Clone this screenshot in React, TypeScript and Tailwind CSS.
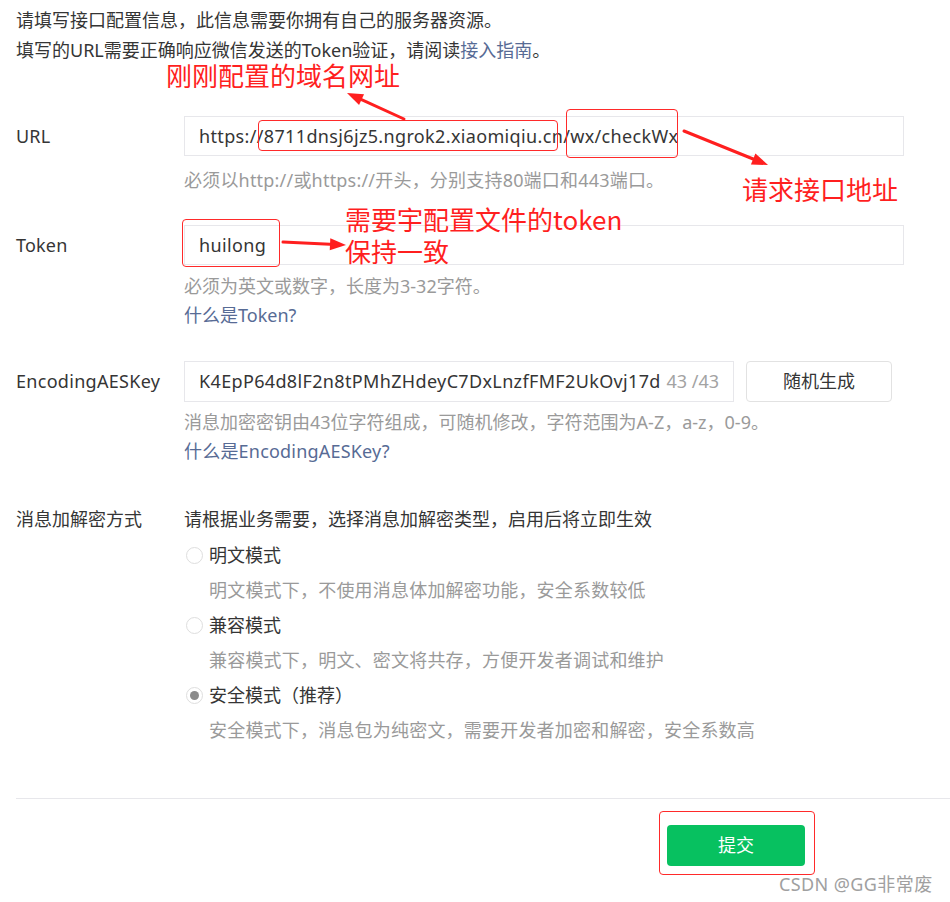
const FONT = "font-['Noto_Sans','Noto_Sans_CJK_SC',sans-serif]";
const RED_FONT = "font-['Noto_Sans_CJK_SC',sans-serif]";

function Radio({ checked }: { checked?: boolean }) {
  return (
    <span className="w-[17px] h-[17px] rounded-full border border-[#dedede] bg-white flex items-center justify-center shrink-0">
      {checked && <span className="w-[9px] h-[9px] rounded-full bg-[#8c8c8c]" />}
    </span>
  );
}

function Field({ label, children }: { label: string; children: React.ReactNode }) {
  return (
    <div className="flex">
      <div className="w-[184px] shrink-0 pl-4 h-[40px] leading-[40px] tracking-[0.2px]">{label}</div>
      <div className="flex-1 pr-[46px]">{children}</div>
    </div>
  );
}

const modes = [
  { name: '明文模式', desc: '明文模式下，不使用消息体加解密功能，安全系数较低' },
  { name: '兼容模式', desc: '兼容模式下，明文、密文将共存，方便开发者调试和维护' },
  { name: '安全模式（推荐）', desc: '安全模式下，消息包为纯密文，需要开发者加密和解密，安全系数高', checked: true },
];

function Arrow({ x1, y1, x2, y2 }: { x1: number; y1: number; x2: number; y2: number }) {
  const a = Math.atan2(y2 - y1, x2 - x1);
  const len = 16;
  const w = 6;
  const bx = x2 - len * Math.cos(a);
  const by = y2 - len * Math.sin(a);
  const px = -Math.sin(a) * w;
  const py = Math.cos(a) * w;
  return (
    <g>
      <line x1={x1} y1={y1} x2={bx} y2={by} stroke="#ff1f1f" strokeWidth={3} strokeLinecap="round" />
      <polygon points={`${x2},${y2} ${bx + px},${by + py} ${bx - px},${by - py}`} fill="#ff1f1f" />
    </g>
  );
}

export default function App() {
  return (
    <div className={`relative w-[950px] h-[902px] bg-white overflow-hidden text-[18px] text-[#353535] ${FONT}`}>
      {/* intro */}
      <div className="pt-[5px] pl-4 leading-[30px]">
        <div>请填写接口配置信息，此信息需要你拥有自己的服务器资源。</div>
        <div>
          填写的URL需要正确响应微信发送的Token验证，请阅读<span className="text-[#576b95]">接入指南</span>。
        </div>
      </div>

      {/* URL */}
      <div className="mt-[51px]">
        <Field label="URL">
          <div className="h-[40px] border border-[#e7e7eb] bg-white pl-[14px] leading-[38px] whitespace-nowrap overflow-hidden tracking-[0.35px]">
            https://8711dnsj6jz5.ngrok2.xiaomiqiu.cn/wx/checkWx
          </div>
          <div className="mt-[10px] leading-[28px] text-[#9a9a9a] tracking-[0.2px]">必须以http://或https://开头，分别支持80端口和443端口。</div>
        </Field>
      </div>

      {/* Token */}
      <div className="mt-[31px]">
        <Field label="Token">
          <div className="h-[40px] border border-[#e7e7eb] bg-white pl-[14px] leading-[38px] tracking-[0.35px]">huilong</div>
          <div className="mt-[7px] leading-[29px] text-[#9a9a9a]">必须为英文或数字，长度为3-32字符。</div>
          <div className="leading-[29px] text-[#576b95]">什么是Token?</div>
        </Field>
      </div>

      {/* EncodingAESKey */}
      <div className="mt-[31px]">
        <div className="flex">
          <div className="w-[184px] shrink-0 pl-4 h-[41px] leading-[41px] tracking-[0.3px]">EncodingAESKey</div>
          <div className="flex-1">
            <div className="flex gap-3">
              <div className="w-[550px] h-[41px] border border-[#e7e7eb] bg-white flex items-center pl-[14px] pr-[14px]">
                <span className="flex-1 overflow-hidden whitespace-nowrap tracking-[0.35px]">K4EpP64d8lF2n8tPMhZHdeyC7DxLnzfFMF2UkOvj17dPmQ2</span>
                <span className="pl-[6px] bg-white text-[#a3a3a3] whitespace-nowrap">43 /43</span>
              </div>
              <button className="w-[146px] h-[41px] border border-[#e2e2e2] rounded-[4px] bg-white">随机生成</button>
            </div>
            <div className="mt-[6px] leading-[29px] text-[#9a9a9a]">消息加密密钥由43位字符组成，可随机修改，字符范围为A-Z，a-z，0-9。</div>
            <div className="leading-[29px] text-[#576b95] tracking-[0.2px]">什么是EncodingAESKey?</div>
          </div>
        </div>
      </div>

      {/* encryption mode */}
      <div className="mt-[39px] flex">
        <div className="w-[184px] shrink-0 pl-4 leading-[29px]">消息加解密方式</div>
        <div className="flex-1">
          <div className="leading-[29px]">请根据业务需要，选择消息加解密类型，启用后将立即生效</div>
          <div className="mt-[3px]">
            {modes.map((m) => (
              <div key={m.name}>
                <div className="h-[36px] flex items-center gap-[6px] pl-[2px]">
                  <Radio checked={m.checked} />
                  <span>{m.name}</span>
                </div>
                <div className="h-[34px] leading-[34px] pl-[25px] text-[#9a9a9a] tracking-[0.2px]">{m.desc}</div>
              </div>
            ))}
          </div>
        </div>
      </div>

      {/* footer */}
      <div className="mt-[51px] ml-4 h-px bg-[#e7e7eb]" />
      <div className="mt-[26px] pl-[667px]">
        <button className="w-[138px] h-[41px] rounded-[4px] bg-[#07c160] text-white">提交</button>
      </div>

      {/* annotations */}
      <div className="absolute left-[258px] top-[120px] w-[300px] h-[31px] border-[1.5px] border-[#ff2a2a] rounded-[4px]" />
      <div className="absolute left-[566px] top-[109px] w-[112px] h-[49px] border-[1.5px] border-[#ff2a2a] rounded-[4px]" />
      <div className="absolute left-[182px] top-[219px] w-[98px] h-[48px] border-[1.5px] border-[#ff2a2a] rounded-[4px]" />
      <div className="absolute left-[659px] top-[811px] w-[156px] h-[64px] border-[1.5px] border-[#ff2a2a] rounded-[4px]" />

      <svg className="absolute inset-0 pointer-events-none" width="950" height="902">
        <Arrow x1={404} y1={119} x2={347} y2={93} />
        <Arrow x1={684} y1={131} x2={768} y2={165} />
        <Arrow x1={283} y1={242} x2={346} y2={245} />
      </svg>

      <div className={`absolute left-[166px] top-[58px] text-[26px] leading-[34px] text-[#ff1f1f] ${RED_FONT}`}>刚刚配置的域名网址</div>
      <div className={`absolute left-[742px] top-[172px] text-[26px] leading-[34px] text-[#ff1f1f] ${RED_FONT}`}>请求接口地址</div>
      <div className={`absolute left-[345px] top-[203px] text-[26px] leading-[32px] text-[#ff1f1f] ${RED_FONT}`}>
        <div>需要宇配置文件的token</div>
        <div>保持一致</div>
      </div>

      <div className={`absolute left-[779px] top-[870px] text-[18px] leading-[28px] tracking-[0.4px] text-[#a0a0a0] ${FONT}`}>CSDN @GG非常废</div>
    </div>
  );
}
